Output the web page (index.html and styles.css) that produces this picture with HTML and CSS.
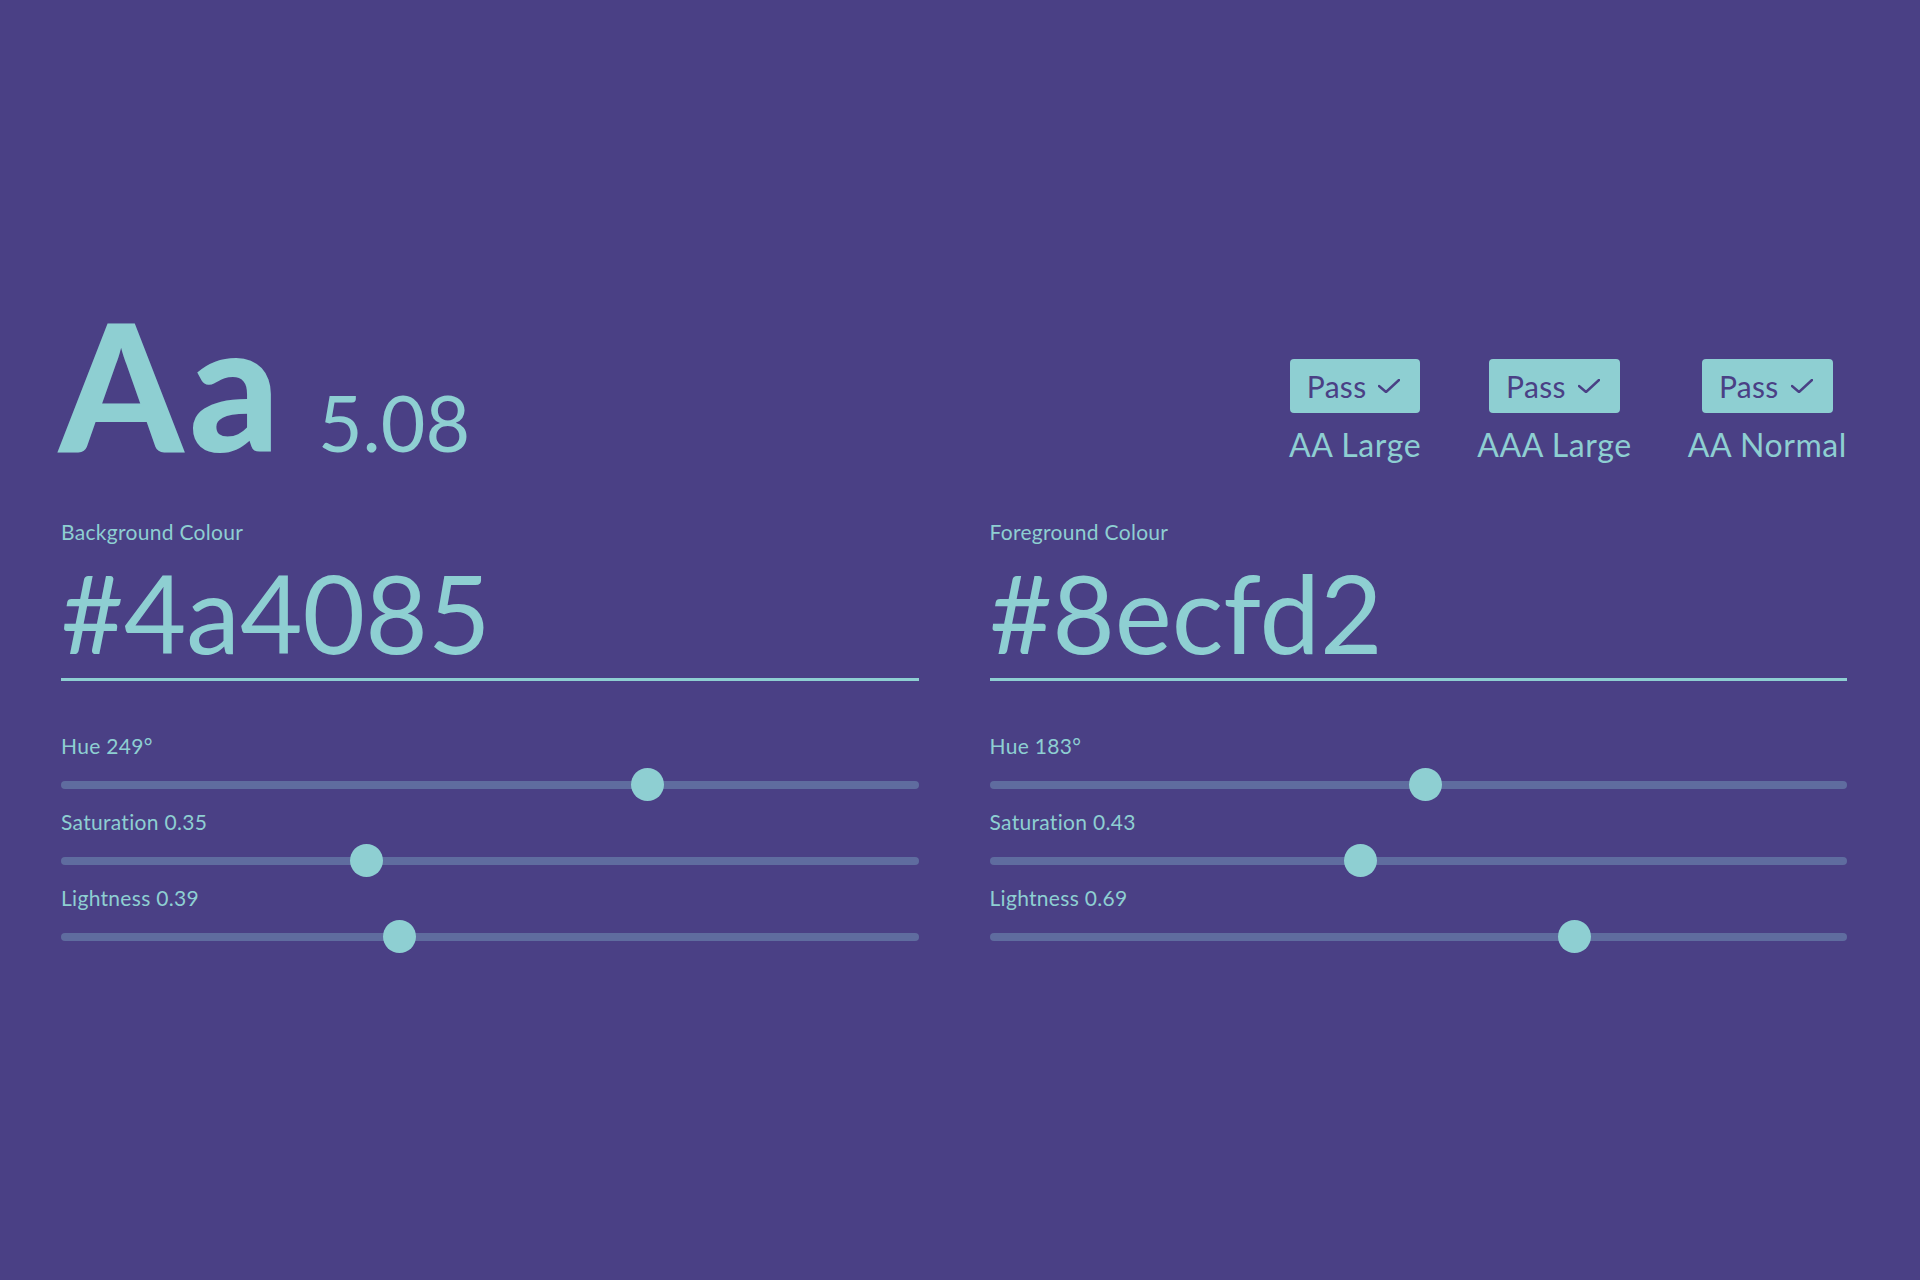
FILE: index.html
```html
<!DOCTYPE html>
<html>
<head>
    <title>Colour Contrast</title>
    <link rel="stylesheet" href="styles.css">
</head>
<body>
    <div class="page">
        <div class="summary">
            <div class="score">
                <span class="sample">Aa</span>
                <span class="ratio">5.08</span>
            </div>
            <div class="checks">
                <div class="check">
                    <span class="badge">Pass <svg class="tick" viewBox="0 0 22 14"><polyline points="1,7 8,13 21,1" /></svg></span>
                    <span class="check-name">AA Large</span>
                </div>
                <div class="check">
                    <span class="badge">Pass <svg class="tick" viewBox="0 0 22 14"><polyline points="1,7 8,13 21,1" /></svg></span>
                    <span class="check-name">AAA Large</span>
                </div>
                <div class="check">
                    <span class="badge">Pass <svg class="tick" viewBox="0 0 22 14"><polyline points="1,7 8,13 21,1" /></svg></span>
                    <span class="check-name">AA Normal</span>
                </div>
            </div>
        </div>

        <div class="panels">
            <div class="panel">
                <label class="panel-title">Background Colour</label>
                <input class="hex" type="text" value="#4a4085">
                <div class="control">
                    <label>Hue 249°</label>
                    <input type="range" min="0" max="360" value="249">
                </div>
                <div class="control">
                    <label>Saturation 0.35</label>
                    <input type="range" min="0" max="1" step="0.01" value="0.35">
                </div>
                <div class="control">
                    <label>Lightness 0.39</label>
                    <input type="range" min="0" max="1" step="0.01" value="0.39">
                </div>
            </div>
            <div class="panel">
                <label class="panel-title">Foreground Colour</label>
                <input class="hex" type="text" value="#8ecfd2">
                <div class="control">
                    <label>Hue 183°</label>
                    <input type="range" min="0" max="360" value="183">
                </div>
                <div class="control">
                    <label>Saturation 0.43</label>
                    <input type="range" min="0" max="1" step="0.01" value="0.43">
                </div>
                <div class="control">
                    <label>Lightness 0.69</label>
                    <input type="range" min="0" max="1" step="0.01" value="0.69">
                </div>
            </div>
        </div>
    </div>
</body>
</html>
```

FILE: styles.css
```css
body {
    margin: 0;
    background-color: #4a4085;
    color: #8ecfd2;
    font-family: Lato, "Open Sans", sans-serif;
}

.page {
    padding: 295px 73px 0 61px;
}

.summary {
    display: flex;
    justify-content: space-between;
    align-items: flex-start;
}

.score {
    display: flex;
    align-items: baseline;
    gap: 32px;
    line-height: 1;
}

.sample {
    font-size: 177px;
    font-weight: 900;
    letter-spacing: 6px;
    margin-left: -2px;
}

.ratio {
    font-size: 77px;
}

.checks {
    display: flex;
    gap: 56px;
    margin-top: 64px;
}

.check {
    display: flex;
    flex-direction: column;
    align-items: center;
}

.badge {
    display: flex;
    align-items: center;
    gap: 12px;
    height: 54px;
    padding: 0 20px 0 17px;
    background-color: #8ecfd2;
    color: #4a4085;
    border-radius: 4px;
    font-size: 30px;
    letter-spacing: 0.3px;
}

.tick {
    width: 22px;
    height: 14px;
    fill: none;
    stroke: #4a4085;
    stroke-width: 2.4;
    stroke-linecap: round;
    stroke-linejoin: round;
}

.check-name {
    margin-top: 16px;
    font-size: 32px;
    line-height: 1;
    letter-spacing: 0.6px;
}

.panels {
    display: grid;
    grid-template-columns: 1fr 1fr;
    column-gap: 71px;
    margin-top: 49px;
}

.panel label {
    display: block;
    font-size: 21px;
    line-height: 1;
    letter-spacing: 0.3px;
}

.hex {
    display: block;
    box-sizing: border-box;
    width: 100%;
    height: 123px;
    margin: 16px 0 0;
    padding: 0 0 13px;
    border: none;
    border-bottom: 3px solid #8ecfd2;
    background: transparent;
    color: #8ecfd2;
    font-family: inherit;
    font-size: 108px;
    line-height: 1;
    outline: none;
}

.control {
    margin-top: 10px;
}

.hex + .control {
    margin-top: 54px;
}

.control input[type=range] {
    -webkit-appearance: none;
    appearance: none;
    display: block;
    width: 100%;
    height: 33px;
    margin: 12px 0 0;
    background: transparent;
}

.control input[type=range]::-webkit-slider-runnable-track {
    height: 8px;
    border-radius: 4px;
    background-color: #5f6c9f;
}

.control input[type=range]::-webkit-slider-thumb {
    -webkit-appearance: none;
    width: 33px;
    height: 33px;
    margin-top: -12.5px;
    border: none;
    border-radius: 50%;
    background-color: #8ecfd2;
}
```
